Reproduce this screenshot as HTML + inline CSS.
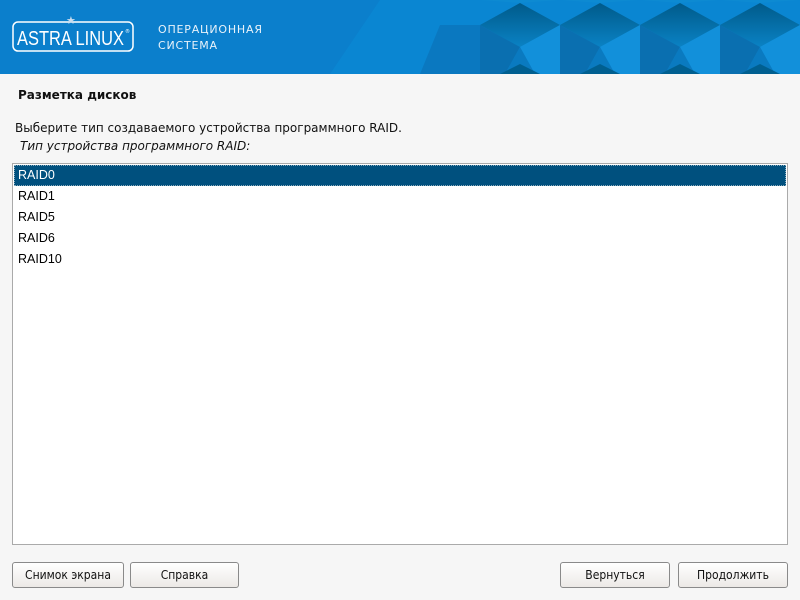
<!DOCTYPE html>
<html><head><meta charset="utf-8"><style>
body{margin:0;width:800px;height:600px;background:#f6f6f6;font-family:"DejaVu Sans","Liberation Sans",sans-serif;position:relative;overflow:hidden}
.hdr{position:absolute;left:0;top:0;width:800px;height:74px;background:#0b7fcc}
.t{position:absolute;font-size:12px;color:#111;white-space:nowrap}
.list{position:absolute;left:12px;top:163px;width:774px;height:380px;background:#fff;border:1px solid #aaa}
.it{position:absolute;left:5px;font-family:"Liberation Sans",sans-serif;font-size:12.5px;color:#000}
.sel{position:absolute;left:1px;top:1px;width:772px;height:21px;background:#00507e;outline:1px dotted #8ab;outline-offset:-1px}
.btn{position:absolute;top:562px;height:24px;border:1px solid #8a8a8a;border-radius:3px;background:linear-gradient(#fff,#ece9e6);font-size:12px;text-align:center;line-height:24px;color:#111;font-family:"DejaVu Sans Condensed","DejaVu Sans",sans-serif}
</style></head><body>
<div class="hdr">
<svg width="800" height="74" style="position:absolute;left:0;top:0">
<defs><linearGradient id="g" x1="0" y1="0" x2="0" y2="1"><stop offset="0" stop-color="#005a8a"/><stop offset="1" stop-color="#0a82c4"/></linearGradient>
<g id="cell">
<polygon points="-40,0 40,0 0,3" fill="#0d8ad2"/>
<polygon points="-40,25 0,3 40,25 0,47" fill="url(#g)"/>
<polygon points="-40,25 0,47 -15,74 -40,74" fill="#0a6fb0"/>
<polygon points="0,47 40,25 40,74 15,74" fill="#1290da"/>
<polygon points="-15,74 0,47 15,74" fill="#0a7ac0"/>
<polygon points="-20,74 0,64 20,74" fill="#005f90"/>
</g></defs>
<polygon points="380,0 800,0 800,74 330,74" fill="#0a86d2"/>
<polygon points="440,25 480,25 480,74 420,74" fill="#0a78c0"/>
<use href="#cell" x="520"/>
<use href="#cell" x="600"/>
<use href="#cell" x="680"/>
<use href="#cell" x="760"/>
<rect x="13" y="22" width="120" height="29" rx="5" fill="none" stroke="#fff" stroke-width="1.5"/>
<text x="17" y="45" fill="#fff" font-family="Liberation Sans" font-size="20" textLength="107" lengthAdjust="spacingAndGlyphs">ASTRA LINUX</text>
<text x="125" y="33" fill="#fff" font-size="5">®</text>
<text x="66" y="24" fill="#cde" font-size="11">★</text>
</svg>
<div class="t" style="left:158px;top:23px;color:#e8f2fa;font-size:11px;letter-spacing:0.8px">ОПЕРАЦИОННАЯ</div>
<div class="t" style="left:158px;top:39px;color:#e8f2fa;font-size:11px;letter-spacing:0.8px">СИСТЕМА</div>
</div>
<div class="t" style="left:18px;top:88px;font-weight:bold">Разметка дисков</div>
<div class="t" style="left:15px;top:121px">Выберите тип создаваемого устройства программного RAID.</div>
<div class="t" style="left:20px;top:139px;font-style:italic">Тип устройства программного RAID:</div>
<div class="list">
<div class="sel"></div>
<div class="it" style="top:4px;color:#fff">RAID0</div>
<div class="it" style="top:25px">RAID1</div>
<div class="it" style="top:46px">RAID5</div>
<div class="it" style="top:67px">RAID6</div>
<div class="it" style="top:88px">RAID10</div>
</div>
<div class="btn" style="left:12px;width:110px">Снимок экрана</div>
<div class="btn" style="left:130px;width:107px">Справка</div>
<div class="btn" style="left:560px;width:108px">Вернуться</div>
<div class="btn" style="left:678px;width:108px">Продолжить</div>
</body></html>
